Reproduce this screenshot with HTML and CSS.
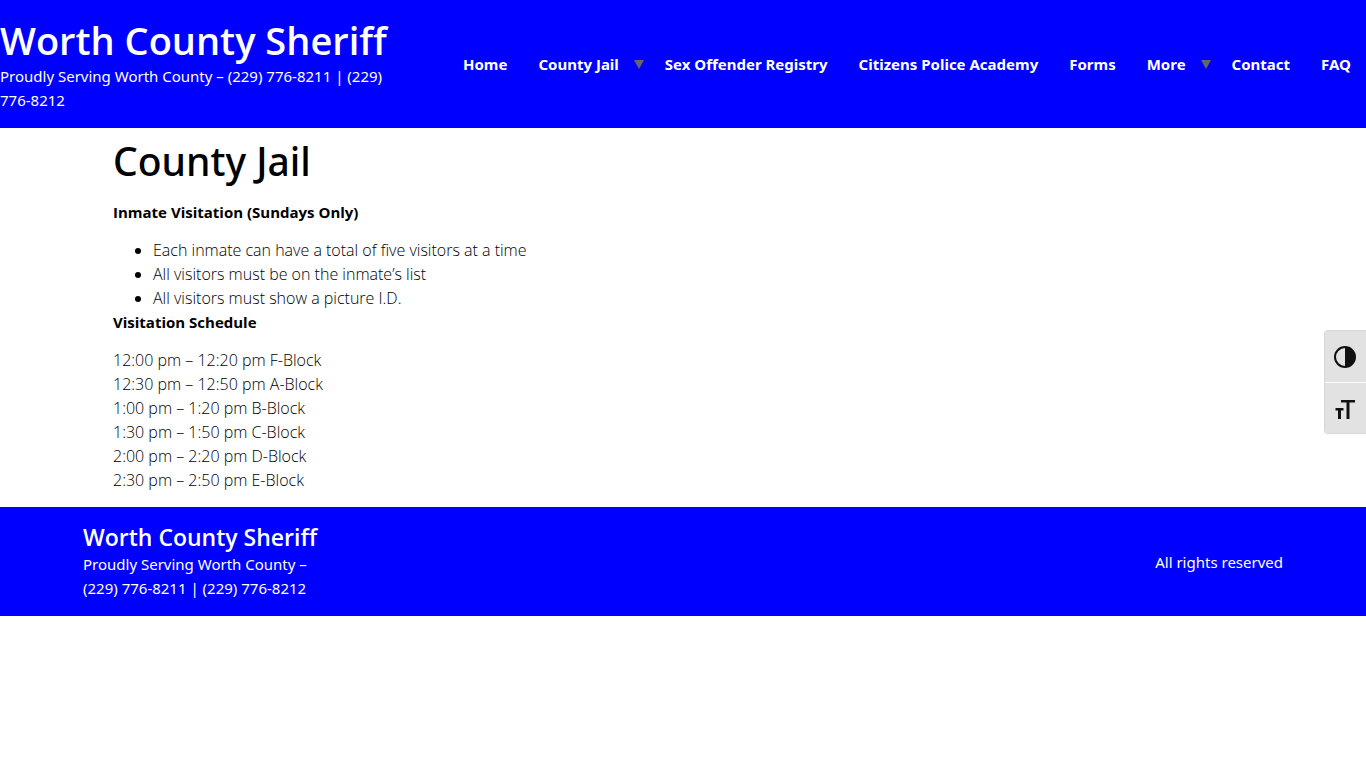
FILE: index.html
```html
<!DOCTYPE html>
<html lang="en-US">
<head>
 <meta charset="UTF-8">
 <meta name="viewport" content="width=device-width, initial-scale=1">
 <title>County Jail – Worth County Sheriff</title>
 <link rel="stylesheet" href="styles.css">
</head>
<body>
<header class="site-header">
 <div class="site-branding">
  <h1 class="site-title"><a href="#">Worth County Sheriff</a></h1>
  <p class="site-description">Proudly Serving Worth County – (229) 776-8211 | (229) 776-8212</p>
 </div>
 <nav class="site-navigation" aria-label="Main menu">
  <ul class="menu">
   <li><a href="#">Home</a></li>
   <li class="has-children"><a href="#">County Jail</a></li>
   <li><a href="#">Sex Offender Registry</a></li>
   <li><a href="#">Citizens Police Academy</a></li>
   <li><a href="#">Forms</a></li>
   <li class="has-children"><a href="#">More</a></li>
   <li><a href="#">Contact</a></li>
   <li><a href="#">FAQ</a></li>
  </ul>
 </nav>
</header>

<main class="site-main">
 <h1 class="entry-title">County Jail</h1>
 <p><strong>Inmate Visitation (Sundays Only)</strong></p>
 <ul class="rules">
  <li>Each inmate can have a total of five visitors at a time</li>
  <li>All visitors must be on the inmate’s list</li>
  <li>All visitors must show a picture I.D.</li>
 </ul>
 <p><strong>Visitation Schedule</strong></p>
 <p>12:00 pm – 12:20 pm F-Block<br>
 12:30 pm – 12:50 pm A-Block<br>
 1:00 pm – 1:20 pm B-Block<br>
 1:30 pm – 1:50 pm C-Block<br>
 2:00 pm – 2:20 pm D-Block<br>
 2:30 pm – 2:50 pm E-Block</p>
</main>

<footer class="site-footer">
 <div class="footer-inner">
  <div class="footer-branding">
   <h4 class="footer-title"><a href="#">Worth County Sheriff</a></h4>
   <p class="site-description">Proudly Serving Worth County – (229) 776-8211 | (229) 776-8212</p>
  </div>
  <p class="copyright">All rights reserved</p>
 </div>
</footer>

<div class="a11y-toolbar">
 <button type="button" aria-label="Toggle High Contrast">
  <svg width="24" height="24" viewBox="0 0 24 24" aria-hidden="true">
   <circle cx="12" cy="12" r="10" fill="none" stroke="#111" stroke-width="2"/>
   <path d="M12 2a10 10 0 0 1 0 20z" fill="#111"/>
  </svg>
 </button>
 <button type="button" aria-label="Toggle Font size">
  <svg width="24" height="24" viewBox="0 0 24 24" aria-hidden="true">
   <path d="M8 4h14v2.500h-5.500V23h-3V6.500H8zM2.500 12H10.500v2.500H8v8.500h-3v-8.500H2.500z" fill="#111"/>
  </svg>
 </button>
</div>
</body>
</html>
```
FILE: styles.css
```css
*{
  box-sizing: border-box;
}
body{
  margin: 0;
  background: #fff;
  color: #000;
  font-family: "Segoe UI", "Noto Sans", "Open Sans", sans-serif;
  font-size: 15px;
  line-height: 24px;
}
h1, h4, p, ul{
  margin: 0;
}
a{
  color: inherit;
  text-decoration: none;
}
.site-header{
  display: flex;
  align-items: center;
  justify-content: space-between;
  padding: 16px 0;
  background: #00f;
  color: #fff;
}
.site-branding{
  flex: 0 1 400px;
}
.site-title,
.footer-title{
  font-family: "Segoe UI", "Open Sans", sans-serif;
  font-weight: 600;
  white-space: nowrap;
}
.site-title{
  font-size: 38px;
  line-height: 48px;
}
.menu{
  display: flex;
  gap: 1px;
  padding: 0;
  list-style: none;
  font-weight: 700;
  white-space: nowrap;
}
.menu li{
  display: flex;
  align-items: center;
}
.menu a{
  padding: 0 15px;
}
.has-children::after{
  content: "";
  border: 5px solid transparent;
  border-top: 9px solid #666;
  border-bottom: 0;
}
.has-children + li a{
  padding-left: 20px;
}
.site-main{
  max-width: 1140px;
  margin: 0 auto;
  padding: 9px 0 1px;
}
.entry-title{
  margin-bottom: 15px;
  font-size: 39px;
  font-weight: 500;
  line-height: 48px;
}
.site-main p{
  margin-bottom: 14px;
}
.site-main p,
.rules{
  font-family: "Segoe UI", "Open Sans", sans-serif;
  font-size: 16px;
  font-weight: 300;
}
.site-main strong{
  font-size: 15px;
  font-weight: 700;
}
.rules{
  padding-left: 40px;
}
.site-footer{
  padding: 16px 0;
  background: #00f;
  color: #fff;
}
.footer-inner{
  display: flex;
  align-items: center;
  justify-content: space-between;
  max-width: 1200px;
  margin: 0 auto;
}
.footer-branding{
  flex: 0 1 240px;
}
.footer-title{
  font-size: 23px;
  line-height: 29px;
}
.a11y-toolbar{
  position: fixed;
  top: 43%;
  right: 0;
  display: grid;
  border: 1px solid #d8d8d8;
  border-right: 0;
  border-radius: 4px 0 0 4px;
  overflow: hidden;
}
.a11y-toolbar button{
  display: block;
  height: 51px;
  padding: 0 9px 0 8px;
  border: 0;
  background: #e2e2e2;
  cursor: pointer;
}
.a11y-toolbar button + button{
  border-top: 1px solid #fafafa;
}
.a11y-toolbar svg{
  display: block;
}
```
